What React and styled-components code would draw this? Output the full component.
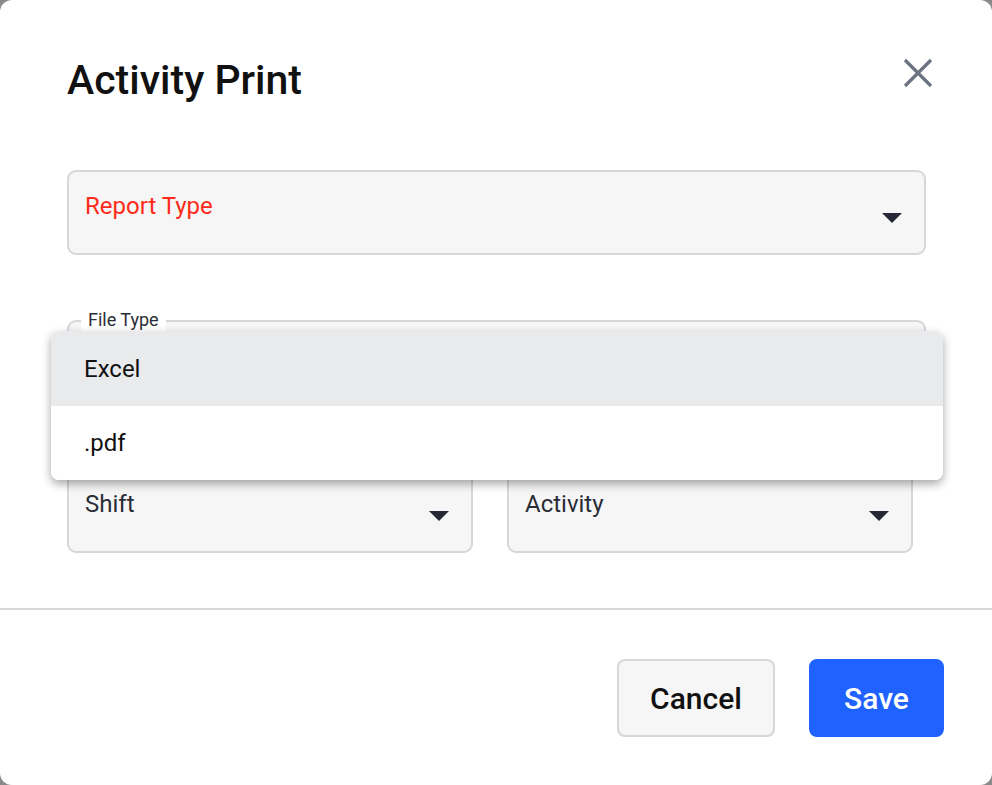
import React from "react";
import styled, { createGlobalStyle } from "styled-components";

const Global = createGlobalStyle`
  html, body {
    margin: 0;
    padding: 0;
    background: #8a8a8a;
    font-family: Roboto, "Liberation Sans", sans-serif;
  }
  * { box-sizing: border-box; }
`;

const Modal = styled.div`
  width: 992px;
  height: 785px;
  background: #ffffff;
  border-radius: 12px;
  display: flex;
  flex-direction: column;
`;

const Header = styled.div`
  display: flex;
  justify-content: space-between;
  align-items: flex-start;
  padding: 57px 58px 0 67px;
`;

const Title = styled.h1`
  margin: 0;
  font-size: 41px;
  font-weight: 500;
  color: #111111;
  line-height: 46px;
`;

const CloseButton = styled.button`
  border: none;
  background: none;
  padding: 0;
  width: 32px;
  height: 32px;
  cursor: pointer;
  display: flex;
`;

const Body = styled.div`
  padding: 67px 66px 55px 67px;
  display: flex;
  flex-direction: column;
  gap: 65px;
`;

const SelectBox = styled.div`
  position: relative;
  flex-shrink: 0;
  height: 85px;
  width: ${(p) => p.width || "100%"};
  background: #f6f6f6;
  border: 2px solid #d6d6db;
  border-radius: 9px;
  padding: 18px 16px;
  display: flex;
  justify-content: space-between;
`;

const Placeholder = styled.span`
  font-size: 24px;
  line-height: 32px;
  color: ${(p) => (p.error ? "#ff2a1a" : "#2a2d36")};
`;

const Arrow = styled.span`
  align-self: center;
  margin-top: 10px;
  margin-right: 6px;
  width: 0;
  height: 0;
  border-left: 10px solid transparent;
  border-right: 10px solid transparent;
  border-top: 10px solid #262935;
`;

const Fieldset = styled.div`
  position: relative;
  flex-shrink: 0;
  height: 85px;
  border: 2px solid #d6d6db;
  border-radius: 9px;
  background: #f6f6f6;
`;

const Legend = styled.span`
  position: absolute;
  top: -14px;
  left: 12px;
  padding: 0 7px;
  background: #ffffff;
  font-size: 18px;
  line-height: 24px;
  color: #2a2d36;
`;

const Menu = styled.ul`
  position: absolute;
  top: 9px;
  left: -18px;
  right: -19px;
  margin: 0;
  padding: 0;
  list-style: none;
  background: #ffffff;
  border-radius: 8px;
  overflow: hidden;
  box-shadow: 0 4px 10px rgba(0, 0, 0, 0.35);
  z-index: 2;
`;

const MenuItem = styled.li`
  height: ${(p) => (p.active ? "75px" : "74px")};
  display: flex;
  align-items: center;
  padding-left: 33px;
  font-size: 24px;
  color: #111111;
  background: ${(p) => (p.active ? "#e9eaec" : "#ffffff")};
`;

const Row = styled.div`
  display: flex;
  flex-shrink: 0;
  gap: 34px;
  margin-top: -2px;
`;

const Divider = styled.hr`
  margin: 0;
  border: none;
  border-top: 2px solid #d6d6db;
`;

const Footer = styled.div`
  display: flex;
  justify-content: flex-end;
  gap: 34px;
  padding: 49px 48px 0 0;
`;

const Button = styled.button`
  height: 78px;
  width: ${(p) => (p.primary ? "135px" : "158px")};
  padding: 0;
  border-radius: 8px;
  font-family: Roboto, "Liberation Sans", sans-serif;
  font-size: 30px;
  font-weight: 500;
  cursor: pointer;
  border: 2px solid ${(p) => (p.primary ? "#1f62ff" : "#d6d6db")};
  background: ${(p) => (p.primary ? "#1f62ff" : "#f6f6f6")};
  color: ${(p) => (p.primary ? "#ffffff" : "#111111")};
`;

function Select({ label, error, width }) {
  return (
    <SelectBox width={width}>
      <Placeholder error={error}>{label}</Placeholder>
      <Arrow />
    </SelectBox>
  );
}

export default function App() {
  return (
    <>
      <Global />
      <Modal>
        <Header>
          <Title>Activity Print</Title>
          <CloseButton aria-label="Close">
            <svg width="32" height="32" viewBox="0 0 32 32">
              <path
                d="M3 3 L29 29 M29 3 L3 29"
                stroke="#6b7280"
                strokeWidth="3.2"
              />
            </svg>
          </CloseButton>
        </Header>
        <Body>
          <Select label="Report Type" error />
          <Fieldset>
            <Legend>File Type</Legend>
            <Menu>
              <MenuItem active>Excel</MenuItem>
              <MenuItem>.pdf</MenuItem>
            </Menu>
          </Fieldset>
          <Row>
            <Select label="Shift" width="406px" />
            <Select label="Activity" width="406px" />
          </Row>
        </Body>
        <Divider />
        <Footer>
          <Button>Cancel</Button>
          <Button primary>Save</Button>
        </Footer>
      </Modal>
    </>
  );
}
